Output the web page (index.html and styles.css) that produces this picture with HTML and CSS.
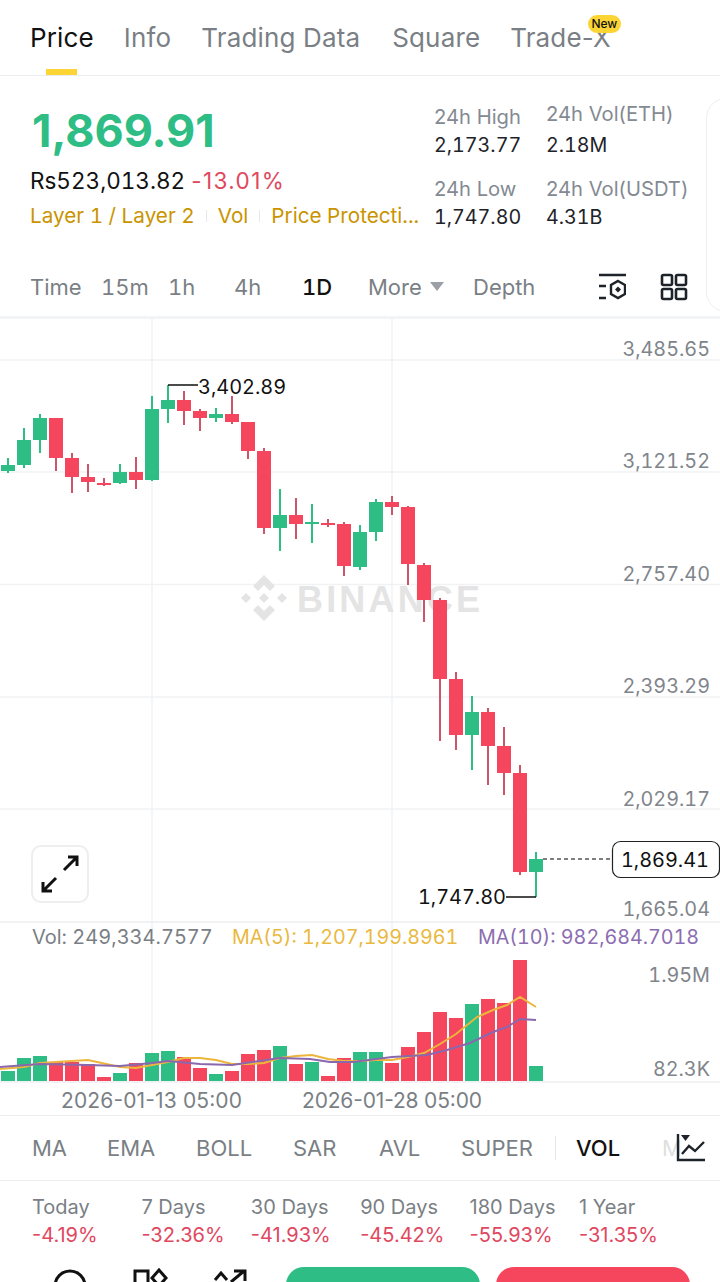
FILE: index.html
```html
<!DOCTYPE html>
<html lang="en">
<head>
    <meta charset="UTF-8">
    <meta name="viewport" content="width=device-width, initial-scale=1.0">
    <title>ETH Price</title>
    <link rel="stylesheet" href="styles.css">
</head>
<body>
    <div class="page">
        <nav class="tabs">
            <a class="tab active">Price</a>
            <a class="tab">Info</a>
            <a class="tab">Trading Data</a>
            <a class="tab tab-square">Square</a>
            <a class="tab tab-new">Trade-X<span class="new-badge">New</span></a>
        </nav>

        <section class="summary">
            <div class="summary-left">
                <div class="last-price">1,869.91</div>
                <div class="fiat-row"><span class="fiat">Rs523,013.82</span><span class="change">-13.01%</span></div>
                <div class="tag-row">
                    <span>Layer 1 / Layer 2</span><i class="tag-sep"></i><span>Vol</span><i class="tag-sep"></i><span>Price Protecti...</span>
                </div>
            </div>
            <div class="stats">
                <div class="stat stat-first"><label>24h High</label><b>2,173.77</b></div>
                <div class="stat stat-up"><label>24h Vol(ETH)</label><b>2.18M</b></div>
                <div class="stat"><label>24h Low</label><b>1,747.80</b></div>
                <div class="stat"><label>24h Vol(USDT)</label><b>4.31B</b></div>
            </div>
            <div class="side-panel"></div>
        </section>

        <div class="timeframes">
            <span>Time</span>
            <span>15m</span>
            <span>1h</span>
            <span>4h</span>
            <span class="selected">1D</span>
            <span class="more">More<i class="caret"></i></span>
            <span>Depth</span>
            <svg class="tool-icon first-tool" viewBox="0 0 28 28">
                <path d="M1 2H28M1 13H8M1 25H8" fill="none" stroke="#1e2329" stroke-width="2.4"/>
                <path d="M20 8L27 12V21L20 25L13 21V12Z" fill="none" stroke="#1e2329" stroke-width="2.4"/>
                <path d="M20 13.5L23 16.5L20 19.5L17 16.5Z" fill="#1e2329"/>
            </svg>
            <svg class="tool-icon" viewBox="0 0 28 28">
                <rect x="2" y="2" width="10" height="10" rx="1.5"/>
                <rect x="16" y="2" width="10" height="10" rx="1.5"/>
                <rect x="2" y="16" width="10" height="10" rx="1.5"/>
                <rect x="16" y="16" width="10" height="10" rx="1.5"/>
            </svg>
        </div>

        <svg class="chart" viewBox="0 319 720 796" width="720" height="796">
            <!-- grid -->
            <path class="grid" d="M0 360H720M0 472H720M0 584.5H720M0 697H720M0 809H720M152 319V1082M392 319V1082"/>
            <path class="grid-strong" d="M0 922H720M0 1082H720"/>

            <!-- watermark -->
            <g class="mark">
                <path d="M264 575L275 586L270 591L264 585L258 591L253 586Z"/>
                <path d="M246 593L251 598L246 603L241 598Z"/>
                <path d="M282 593L287 598L282 603L277 598Z"/>
                <path d="M264 593L269 598L264 603L259 598Z"/>
                <path d="M253 610L258 605L264 611L270 605L275 610L264 621Z"/>
                <text class="mark-text" x="297" y="612" textLength="183">BINANCE</text>
            </g>

            <!-- candles -->
            <g class="up">
                <path class="wick" d="M8 458V473M24 428V468M40 414V453M120 464V484M152 396V481M168 385V423M216 408V422M280 489V551M312 504V543M360 525V570M376 499V541M472 696V770M536 852V897"/>
                <rect x="1" y="465" width="14" height="6"/>
                <rect x="17" y="440" width="14" height="25"/>
                <rect x="33" y="418" width="14" height="22"/>
                <rect x="113" y="472" width="14" height="11"/>
                <rect x="145" y="409" width="14" height="71"/>
                <rect x="161" y="400" width="14" height="9"/>
                <rect x="209" y="414" width="14" height="4"/>
                <rect x="273" y="515" width="14" height="13"/>
                <rect x="305" y="522" width="14" height="2"/>
                <rect x="353" y="532" width="14" height="35"/>
                <rect x="369" y="502" width="14" height="30"/>
                <rect x="465" y="712" width="14" height="23"/>
                <rect x="529" y="859" width="14" height="13"/>
            </g>
            <g class="down">
                <path class="wick" d="M56 418V471M72 453V493M88 464V492M104 478V486M136 457V489M184 391V425M200 409V431M232 396V424M248 422V459M264 448V534M296 498V539M328 519V527M344 522V576M392 496V515M408 506V585M424 563V622M440 598V741M456 672V750M488 708V785M504 727V795M520 765V875"/>
                <rect x="49" y="418" width="14" height="40"/>
                <rect x="65" y="458" width="14" height="19"/>
                <rect x="81" y="477" width="14" height="5"/>
                <rect x="97" y="483" width="14" height="2"/>
                <rect x="129" y="472" width="14" height="8"/>
                <rect x="177" y="400" width="14" height="11"/>
                <rect x="193" y="411" width="14" height="7"/>
                <rect x="225" y="414" width="14" height="8"/>
                <rect x="241" y="422" width="14" height="29"/>
                <rect x="257" y="451" width="14" height="77"/>
                <rect x="289" y="515" width="14" height="9"/>
                <rect x="321" y="523" width="14" height="2"/>
                <rect x="337" y="524" width="14" height="42"/>
                <rect x="385" y="502" width="14" height="5"/>
                <rect x="401" y="507" width="14" height="57"/>
                <rect x="417" y="565" width="14" height="35"/>
                <rect x="433" y="600" width="14" height="79"/>
                <rect x="449" y="679" width="14" height="56"/>
                <rect x="481" y="712" width="14" height="34"/>
                <rect x="497" y="746" width="14" height="27"/>
                <rect x="513" y="773" width="14" height="99"/>
            </g>

            <!-- high / low / last price -->
            <path class="leader" d="M168 385H198M536 897H506"/>
            <text class="callout" x="198" y="394">3,402.89</text>
            <text class="callout end" x="506" y="904">1,747.80</text>
            <path class="last-line" d="M543 859H612"/>
            <rect class="last-box" x="612.5" y="841.5" width="107" height="36" rx="8"/>
            <text class="callout end" x="709" y="867">1,869.41</text>

            <!-- price axis -->
            <g class="axis">
                <text x="710" y="356">3,485.65</text>
                <text x="710" y="468">3,121.52</text>
                <text x="710" y="581">2,757.40</text>
                <text x="710" y="693">2,393.29</text>
                <text x="710" y="806">2,029.17</text>
                <text x="710" y="916">1,665.04</text>
                <text x="710" y="982">1.95M</text>
                <text x="710" y="1076">82.3K</text>
            </g>

            <!-- fullscreen button -->
            <rect class="expand-box" x="32" y="846" width="56" height="56" rx="9"/>
            <path class="expand-arrow" d="M64 870L77 857M68 857H77V866M56 878L43 891M43 882V891H52"/>

            <!-- volume legend -->
            <text class="legend vol" x="32" y="944">Vol: 249,334.7577</text>
            <text class="legend ma5" x="232" y="944">MA(5): 1,207,199.8961</text>
            <text class="legend ma10" x="478" y="944">MA(10): 982,684.7018</text>

            <!-- volume bars -->
            <g class="up">
                <rect x="1" y="1071" width="14" height="10"/>
                <rect x="17" y="1058" width="14" height="23"/>
                <rect x="33" y="1056" width="14" height="25"/>
                <rect x="113" y="1073" width="14" height="8"/>
                <rect x="145" y="1053" width="14" height="28"/>
                <rect x="161" y="1051" width="14" height="30"/>
                <rect x="209" y="1074" width="14" height="7"/>
                <rect x="273" y="1046" width="14" height="35"/>
                <rect x="305" y="1062" width="14" height="19"/>
                <rect x="353" y="1052" width="14" height="29"/>
                <rect x="369" y="1052" width="14" height="29"/>
                <rect x="465" y="1004" width="14" height="77"/>
                <rect x="529" y="1066" width="14" height="15"/>
            </g>
            <g class="down">
                <rect x="49" y="1062" width="14" height="19"/>
                <rect x="65" y="1062" width="14" height="19"/>
                <rect x="81" y="1064" width="14" height="17"/>
                <rect x="97" y="1077" width="14" height="4"/>
                <rect x="129" y="1063" width="14" height="18"/>
                <rect x="177" y="1057" width="14" height="24"/>
                <rect x="193" y="1068" width="14" height="13"/>
                <rect x="225" y="1071" width="14" height="10"/>
                <rect x="241" y="1054" width="14" height="27"/>
                <rect x="257" y="1050" width="14" height="31"/>
                <rect x="289" y="1064" width="14" height="17"/>
                <rect x="321" y="1076" width="14" height="5"/>
                <rect x="337" y="1058" width="14" height="23"/>
                <rect x="385" y="1063" width="14" height="18"/>
                <rect x="401" y="1047" width="14" height="34"/>
                <rect x="417" y="1032" width="14" height="49"/>
                <rect x="433" y="1012" width="14" height="69"/>
                <rect x="449" y="1018" width="14" height="63"/>
                <rect x="481" y="999" width="14" height="82"/>
                <rect x="497" y="1003" width="14" height="78"/>
                <rect x="513" y="960" width="14" height="121"/>
            </g>
            <polyline class="line-ma5" points="0,1069 24,1067 40,1063 72,1061 88,1060 120,1067 136,1068 152,1065 168,1062 184,1058 200,1058 216,1060 232,1064 248,1064 264,1063 280,1058 296,1056 312,1055 328,1059 344,1061 360,1061 376,1060 392,1060 408,1057 424,1053 440,1044 456,1034 477,1017 493,1010 507,1005 520,997 536,1007"/>
            <polyline class="line-ma10" points="0,1067 40,1064 88,1065 120,1066 152,1063 168,1061 200,1064 232,1065 280,1058 310,1059 330,1062 353,1062 392,1057 427,1055 447,1050 470,1043 493,1032 507,1027 520,1019 536,1020"/>

            <!-- time axis -->
            <text class="axis-date" x="61" y="1108" textLength="181">2026-01-13 05:00</text>
            <text class="axis-date" x="302" y="1108" textLength="180">2026-01-28 05:00</text>
        </svg>

        <div class="indicators">
            <span>MA</span>
            <span>EMA</span>
            <span>BOLL</span>
            <span>SAR</span>
            <span>AVL</span>
            <span>SUPER</span>
            <i class="ind-sep"></i>
            <span class="selected">VOL</span>
            <span class="faded">M</span>
            <svg class="ind-icon" viewBox="0 0 30 30">
                <path d="M2 1V27H29" fill="none" stroke="#1e2329" stroke-width="2.4"/>
                <path d="M6 21L13 13L19 18L28 9" fill="none" stroke="#1e2329" stroke-width="2.4"/>
                <path d="M5 2H14L9.500 8Z" fill="#1e2329"/>
            </svg>
        </div>

        <div class="periods">
            <div><label>Today</label><b>-4.19%</b></div>
            <div><label>7 Days</label><b>-32.36%</b></div>
            <div><label>30 Days</label><b>-41.93%</b></div>
            <div><label>90 Days</label><b>-45.42%</b></div>
            <div><label>180 Days</label><b>-55.93%</b></div>
            <div><label>1 Year</label><b>-31.35%</b></div>
        </div>

        <footer class="actions">
            <svg class="action-icon" viewBox="0 0 36 36"><circle cx="18" cy="18" r="15"/></svg>
            <svg class="action-icon" viewBox="0 0 36 36">
                <rect x="3" y="3" width="13" height="16"/>
                <path d="M27 2L34 10L27 18L20 10Z"/>
            </svg>
            <svg class="action-icon" viewBox="0 0 36 36">
                <path d="M3 12L9 5L15 12M19 14L32 3M22 3H33V13"/>
            </svg>
            <div class="btn btn-buy"></div>
            <div class="btn btn-sell"></div>
        </footer>
    </div>
</body>
</html>
```

FILE: styles.css
```css
* {
    box-sizing: border-box;
}

body {
    margin: 0;
    background: #fff;
    color: #1e2329;
    font-family: 'Inter', 'Roboto', Arial, sans-serif;
    font-variant-numeric: tabular-nums;
}

.page {
    width: 720px;
    height: 1282px;
    overflow: hidden;
}

/* tabs */
.tabs {
    display: flex;
    gap: 30px;
    height: 76px;
    padding: 21px 0 0 30px;
    border-bottom: 1px solid #eceef0;
    font-size: 26px;
    font-variant-numeric: normal;
    letter-spacing: 0.15px;
    line-height: 34px;
    color: #7a7f85;
}

.tab {
    position: relative;
    height: 54px;
}

.tab.active {
    color: #111;
}

.tab.active::after {
    content: '';
    position: absolute;
    left: 16px;
    bottom: 0;
    width: 31px;
    height: 6px;
    background: #fcd535;
}

.tab-square {
    margin-left: 2px;
}

.new-badge {
    position: absolute;
    top: -6px;
    right: -10px;
    width: 33px;
    height: 18px;
    border-radius: 9px;
    background: #fcd535;
    color: #111;
    font-size: 12px;
    font-weight: 500;
    letter-spacing: 0;
    line-height: 18px;
    text-align: center;
}

/* price summary */
.summary {
    position: relative;
    display: flex;
    height: 186px;
}

.summary-left {
    width: 434px;
    padding: 26px 0 0 30px;
}

.last-price {
    height: 58px;
    padding-left: 2px;
    color: #2ebd85;
    font-size: 45px;
    font-variant-numeric: normal;
    font-weight: 700;
    line-height: 58px;
}

.fiat-row {
    margin-top: 5px;
    font-size: 22.5px;
    line-height: 32px;
    color: #111;
}

.change {
    margin-left: 6px;
    color: #e0485f;
    font-variant-numeric: normal;
    letter-spacing: 1.4px;
}

.tag-row {
    display: flex;
    align-items: center;
    margin-top: 5px;
    font-size: 20.7px;
    line-height: 28px;
    color: #c99400;
    white-space: nowrap;
}

.tag-sep {
    width: 1px;
    height: 12px;
    margin: 0 11px;
    background: #e6e8ea;
}

.stats {
    display: grid;
    grid-template-columns: 112px 160px;
    grid-auto-rows: 72px;
    padding-top: 26px;
}

.stat label {
    display: block;
    font-size: 20.2px;
    font-variant-numeric: normal;
    line-height: 30px;
    color: #848a92;
}

.stat b {
    display: block;
    margin-top: -1px;
    font-size: 19.7px;
    font-weight: 400;
    line-height: 28px;
    color: #1e2329;
}

.stat-up {
    margin-top: -3px;
}

.stat-up b {
    margin-top: 2px;
}

.side-panel {
    position: absolute;
    top: 22px;
    left: 706px;
    width: 40px;
    height: 214px;
    border: 1px solid #eceef0;
    border-radius: 20px;
}

/* timeframe bar */
.timeframes {
    display: grid;
    grid-template-columns: 71px 67px 66px 68px 66px 105px 125px 62px 28px;
    align-items: center;
    height: 57px;
    padding: 0 0 5px 30px;
    border-bottom: 3px solid #f3f4f5;
    font-size: 22px;
    color: #7a7f85;
}

.timeframes .selected {
    color: #111;
    font-weight: 500;
}

.more {
    display: flex;
    align-items: center;
}

.caret {
    width: 0;
    height: 0;
    margin-left: 8px;
    border-left: 7px solid transparent;
    border-right: 7px solid transparent;
    border-top: 9px solid #9aa0a6;
}

.tool-icon {
    width: 28px;
    height: 28px;
}

.tool-icon rect {
    fill: none;
    stroke: #1e2329;
    stroke-width: 2.6;
}

/* chart */
.chart {
    display: block;
}

.grid {
    fill: none;
    stroke: #f1f2f3;
    stroke-width: 1.5;
}

.grid-strong {
    fill: none;
    stroke: #eceef0;
    stroke-width: 1.5;
}

.mark path {
    fill: #e4e4e4;
}

.mark-text {
    fill: #e4e4e4;
    font-family: 'Liberation Sans', Arial, sans-serif;
    font-size: 36px;
    font-weight: 700;
}

.up rect {
    fill: #2ebd85;
}

.down rect {
    fill: #f6465d;
}

.up .wick {
    fill: none;
    stroke: #2ebd85;
    stroke-width: 2;
}

.down .wick {
    fill: none;
    stroke: #c8576c;
    stroke-width: 2;
}

.leader {
    fill: none;
    stroke: #111;
    stroke-width: 1.3;
}

.callout {
    fill: #111;
    font-size: 19.9px;
}

.end {
    text-anchor: end;
}

.last-line {
    fill: none;
    stroke: #555;
    stroke-width: 1.3;
    stroke-dasharray: 4 3;
}

.last-box {
    fill: #fff;
    stroke: #222;
    stroke-width: 1.2;
}

.axis text {
    fill: #80858b;
    font-size: 19.8px;
    text-anchor: end;
}

.expand-box {
    fill: #fff;
    stroke: #eceef0;
    stroke-width: 2;
}

.expand-arrow {
    fill: none;
    stroke: #111;
    stroke-width: 3;
}

.legend {
    font-size: 19.7px;
}

.vol {
    fill: #7a7f85;
    font-size: 20px;
}

.ma5 {
    fill: #e9b93f;
}

.ma10 {
    fill: #8c6db1;
}

.line-ma5 {
    fill: none;
    stroke: #ecb63c;
    stroke-width: 2;
}

.line-ma10 {
    fill: none;
    stroke: #8a68ae;
    stroke-width: 2;
}

.axis-date {
    fill: #7a7f85;
    font-size: 21px;
    font-variant-numeric: normal;
}

/* indicator bar */
.indicators {
    position: relative;
    display: grid;
    grid-template-columns: 75px 89px 97px 86px 82px 94px 21px 86px 14px 29px;
    align-items: center;
    height: 66px;
    padding-left: 32px;
    border-top: 1px solid #eceef0;
    border-bottom: 1px solid #eceef0;
    font-size: 22px;
    color: #7a7f85;
}

.indicators .selected {
    color: #111;
    font-weight: 500;
}

.ind-sep {
    width: 1px;
    height: 24px;
    background: #e6e8ea;
}

.faded {
    color: #dedfe1;
}

.ind-icon {
    width: 30px;
    height: 30px;
}

/* period changes */
.periods {
    display: grid;
    grid-template-columns: repeat(6, 109.4px);
    height: 86px;
    padding: 12px 0 0 32px;
    font-size: 20px;
    font-variant-numeric: normal;
}

.periods label {
    display: block;
    line-height: 28px;
    color: #7a7f85;
}

.periods b {
    display: block;
    font-weight: 400;
    line-height: 28px;
    color: #e0485f;
}

/* bottom actions */
.actions {
    display: flex;
    height: 60px;
    padding-left: 52px;
}

.action-icon {
    flex: none;
    width: 36px;
    height: 36px;
    margin: 1px 44px 0 0;
    fill: none;
    stroke: #111;
    stroke-width: 3;
}

.btn {
    flex: none;
    width: 194px;
    height: 60px;
    border-radius: 18px;
}

.btn-buy {
    margin-left: -6px;
    background: #2ebd85;
}

.btn-sell {
    margin-left: 16px;
    background: #f6465d;
}
```
